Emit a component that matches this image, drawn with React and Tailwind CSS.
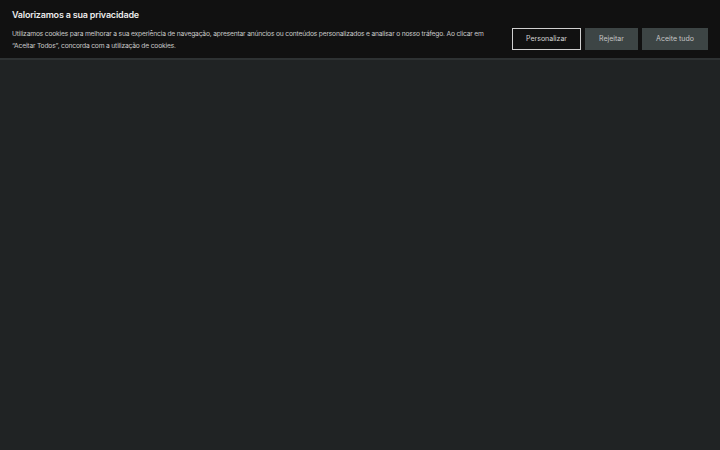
import React from 'react';

const App = () => {
  return (
    <div className="w-[720px] h-[450px] bg-[#202324] overflow-hidden" style={{ fontFamily: 'Inter, "Noto Sans", sans-serif' }}>
      <div className="bg-[#111111] border-b-2 border-[#2e3233] h-[60px] pl-3 pr-3 flex items-center">
        <div className="flex-1 pt-[1px]">
          <h2 className="text-[9px] font-semibold text-[#ececec] leading-[14px] tracking-[-0.2px] mb-[6px]">
            Valorizamos a sua privacidade
          </h2>
          <p className="text-[6.7px] text-[#c9c9c9] leading-[12px] tracking-[-0.18px] w-[484px]">
            Utilizamos cookies para melhorar a sua experiência de navegação, apresentar anúncios ou conteúdos personalizados e analisar o nosso tráfego. Ao clicar em “Aceitar Todos”, concorda com a utilização de cookies.
          </p>
        </div>
        <div className="flex items-center gap-[4px] mt-[20px]">
          <button className="w-[69px] h-[22px] border border-[#d0d0d0] bg-[#111111] text-[#d6d6d6] text-[7px]">
            Personalizar
          </button>
          <button className="w-[53px] h-[22px] bg-[#3d4545] text-[#c6c6c6] text-[7px]">
            Rejeitar
          </button>
          <button className="w-[66px] h-[22px] bg-[#3d4545] text-[#c6c6c6] text-[7px]">
            Aceite tudo
          </button>
        </div>
      </div>
    </div>
  );
};

export default App;
